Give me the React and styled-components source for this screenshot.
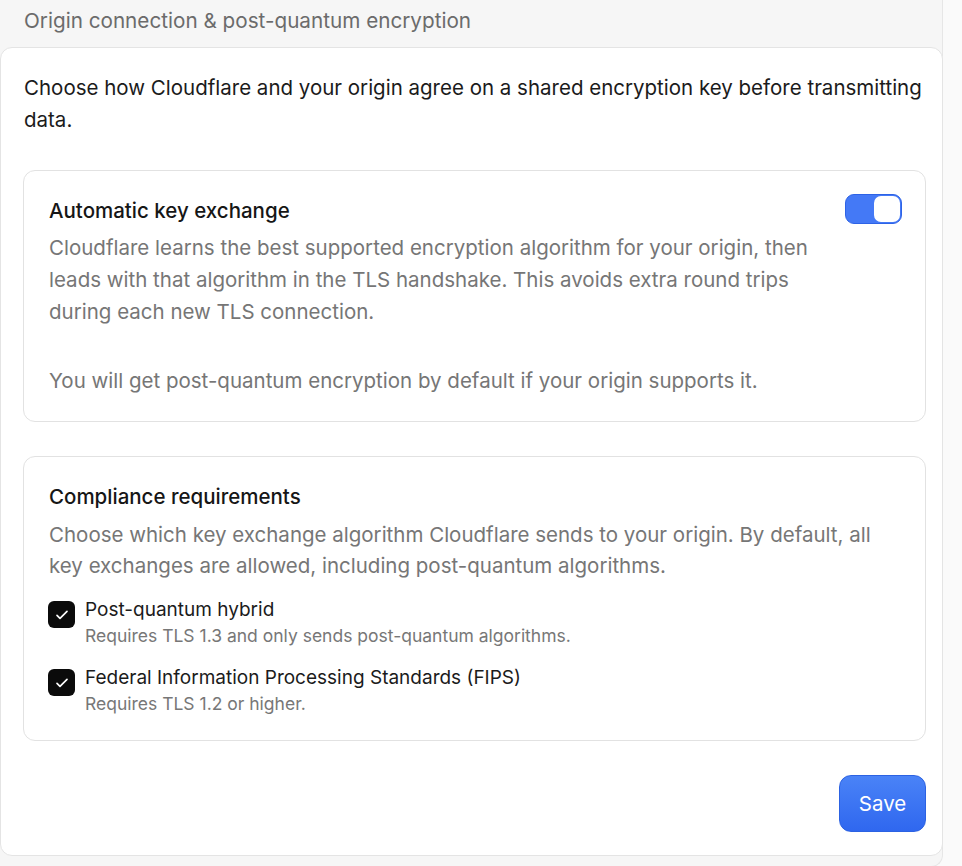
import React, { useState } from 'react';
import styled, { createGlobalStyle } from 'styled-components';

const GlobalStyle = createGlobalStyle`
  html, body {
    margin: 0;
    padding: 0;
    background: #fafafa;
    font-family: Inter, "Noto Sans", sans-serif;
    -webkit-font-smoothing: antialiased;
  }
`;

const Panel = styled.section`
  width: 942px;
  background: #f6f6f6;
  border-right: 1px solid #e6e6e6;
  border-bottom: 1px solid #e6e6e6;
  border-bottom-right-radius: 12px;
  padding-bottom: 10px;
`;

const PanelHeader = styled.div`
  height: 47px;
  display: flex;
  align-items: center;
  padding: 0 24px 7px;
  box-sizing: border-box;
  font-size: 20.7px;
  color: #6b6b6b;
`;

const Body = styled.div`
  background: #fff;
  border: 1px solid #e4e4e4;
  border-radius: 12px;
  padding: 24px 16px 23px 22px;
  margin-right: -1px;
  display: flex;
  flex-direction: column;
  gap: 34px;
`;

const Intro = styled.p`
  margin: 0 0 0 1px;
  font-size: 20.5px;
  line-height: 32px;
  color: #1b1b1b;
`;

const Card = styled.div`
  border: 1px solid #e2e2e2;
  border-radius: 12px;
  padding: 24px 24px 24px 25px;
`;

const CardHead = styled.div`
  display: flex;
  align-items: flex-start;
  justify-content: space-between;
`;

const Title = styled.h3`
  margin: 0;
  font-size: 20.5px;
  font-weight: 450;
  line-height: 32px;
  color: #161616;
`;

const Desc = styled.p`
  margin: ${p => p.$gap || 5}px 0 0;
  font-size: 20.5px;
  line-height: ${p => p.$lh || 32}px;
  color: #767676;
  max-width: ${p => p.$max || 'none'};
`;

const Toggle = styled.button`
  width: 57px;
  height: 30px;
  border-radius: 9px;
  border: 1px solid #2e63e6;
  background: #4479f6;
  padding: 2px;
  display: flex;
  justify-content: ${p => (p.$on ? 'flex-end' : 'flex-start')};
  cursor: pointer;
  margin-top: -1px;
  margin-right: -1px;
  box-sizing: border-box;
`;

const Knob = styled.span`
  width: 26px;
  height: 26px;
  border-radius: 7px;
  background: #fff;
  margin: -1px;
`;

const Options = styled.div`
  display: flex;
  flex-direction: column;
  gap: 17px;
  margin-top: 16px;
`;

const Option = styled.label`
  display: flex;
  gap: 10px;
  align-items: flex-start;
  cursor: pointer;
`;

const Box = styled.span`
  width: 27px;
  height: 27px;
  flex: none;
  border-radius: 6px;
  background: #0b0b0b;
  display: flex;
  align-items: center;
  justify-content: center;
  margin-top: 4px;
  margin-left: -1px;
`;

const OptionText = styled.div`
  display: flex;
  flex-direction: column;
`;

const OptionLabel = styled.span`
  font-size: 19px;
  line-height: 26px;
  color: #1b1b1b;
`;

const OptionSub = styled.span`
  font-size: 17.5px;
  line-height: 25px;
  color: #777;
`;

const Footer = styled.div`
  display: flex;
  justify-content: flex-end;
`;

const SaveButton = styled.button`
  width: 87px;
  height: 57px;
  border-radius: 12px;
  border: 1px solid #2c62e2;
  background: linear-gradient(#4a83f7, #2f67ef);
  color: #fff;
  font-family: inherit;
  font-size: 20.5px;
  cursor: pointer;
`;

const Check = () => (
  <svg width="16" height="16" viewBox="0 0 24 24" fill="none" stroke="#fff" strokeWidth="2.5" strokeLinecap="round" strokeLinejoin="round">
    <path d="M4.5 12.5l4.5 4.5L19.5 6.5" />
  </svg>
);

const options = [
  {
    label: 'Post-quantum hybrid',
    sub: 'Requires TLS 1.3 and only sends post-quantum algorithms.',
  },
  {
    label: 'Federal Information Processing Standards (FIPS)',
    sub: 'Requires TLS 1.2 or higher.',
  },
];

export default function App() {
  const [auto, setAuto] = useState(true);
  return (
    <>
      <GlobalStyle />
      <Panel>
        <PanelHeader>Origin connection &amp; post-quantum encryption</PanelHeader>
        <Body>
          <Intro>
            Choose how Cloudflare and your origin agree on a shared encryption key before transmitting data.
          </Intro>
          <Card>
            <CardHead>
              <Title>Automatic key exchange</Title>
              <Toggle $on={auto} onClick={() => setAuto(!auto)} aria-label="Automatic key exchange">
                <Knob />
              </Toggle>
            </CardHead>
            <Desc $max="790px">
              Cloudflare learns the best supported encryption algorithm for your origin, then leads with that
              algorithm in the TLS handshake. This avoids extra round trips during each new TLS connection.
            </Desc>
            <Desc $gap={37}>You will get post-quantum encryption by default if your origin supports it.</Desc>
          </Card>
          <Card>
            <Title>Compliance requirements</Title>
            <Desc $gap={6} $lh={31}>
              Choose which key exchange algorithm Cloudflare sends to your origin. By default, all key exchanges
              are allowed, including post-quantum algorithms.
            </Desc>
            <Options>
              {options.map(o => (
                <Option key={o.label}>
                  <Box>
                    <Check />
                  </Box>
                  <OptionText>
                    <OptionLabel>{o.label}</OptionLabel>
                    <OptionSub>{o.sub}</OptionSub>
                  </OptionText>
                </Option>
              ))}
            </Options>
          </Card>
          <Footer>
            <SaveButton>Save</SaveButton>
          </Footer>
        </Body>
      </Panel>
    </>
  );
}
